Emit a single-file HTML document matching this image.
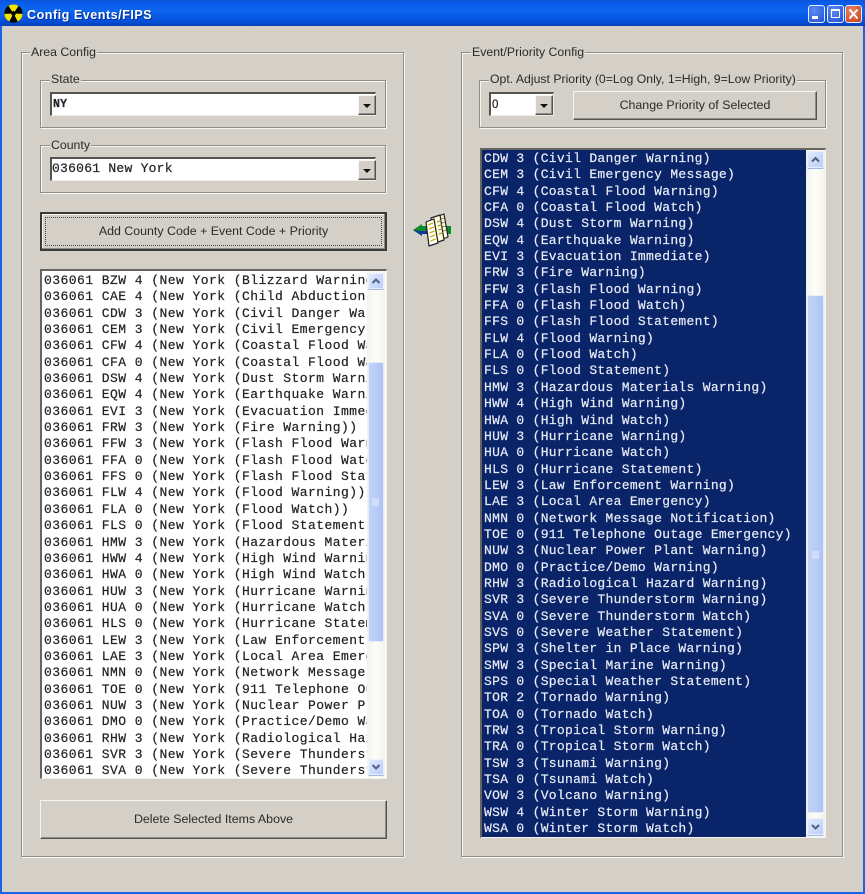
<!DOCTYPE html>
<html><head><meta charset="utf-8"><style>
html,body{margin:0;padding:0}
#w{position:relative;width:865px;height:894px;background:#d4d0c8;overflow:hidden;font-family:"Liberation Sans",sans-serif;color:#222;filter:blur(.3px)}
#w div{position:absolute;box-sizing:border-box}
.tb{left:0;top:0;width:865px;height:26px;background:linear-gradient(#0a55d8,#0a5cec 12%,#0d66ee 40%,#0551dd 80%,#0442b8)}
.bl{left:0;top:26px;width:2px;height:868px;background:#1e62e4}
.br{right:0;top:26px;width:2px;height:868px;background:#1e62e4}
.bb{left:0;bottom:0;width:865px;height:2px;background:#1e62e4}
.tt{left:27px;top:8px;color:#fff;font-weight:bold;font-size:12.6px;letter-spacing:.5px;white-space:nowrap;text-shadow:1px 1px 0 #0a2f90}
.g{border:1px solid #8f8d88;box-shadow:1px 1px 0 #f6f5f1,inset 1px 1px 0 #f6f5f1}
.l{background:#d4d0c8;font-size:12.3px;white-space:nowrap;padding:0 1px;height:15px;line-height:15px;color:#2a2a2a}
.c{background:#fff;border-top:2px solid #55534f;border-left:2px solid #55534f;border-right:1px solid #eeece6;border-bottom:1px solid #eeece6;font:bold 11.5px "Liberation Mono",monospace}
.ct{left:3px;top:3px;font:13px/16px "Liberation Mono",monospace;letter-spacing:.25px;-webkit-text-stroke:.2px #222;white-space:pre;color:#222}
.a{background:#d4d0c8;border:1px solid;border-color:#f6f5f1 #55534f #55534f #f6f5f1;box-shadow:inset -1px -1px 0 #8f8d88}
.a:after{content:"";position:absolute;left:4px;top:8px;border:4px solid transparent;border-top:4px solid #111;border-bottom:0}
.b{background:#d4d0c8;border:1px solid;border-color:#f6f5f1 #55534f #55534f #f6f5f1;box-shadow:inset -1px -1px 0 #8f8d88;text-align:center;font-size:12.4px;color:#2a2a2a}
.li{border-top:2px solid #66645f;border-left:2px solid #66645f;border-right:1px solid #f3f2ee;border-bottom:1px solid #f3f2ee;background:#fff;overflow:hidden}
.r{font:13px/16.34px "Liberation Mono",monospace;white-space:pre;-webkit-text-stroke:.2px currentColor}
.track{background:linear-gradient(90deg,#f4f3ec,#fdfdfa 50%,#f3f2ea)}
.th{background:linear-gradient(90deg,#c2d1f7,#b9cdf8 50%,#aec3f2);border:1px solid #e4ecfb;border-radius:2px}
.sb{background:linear-gradient(135deg,#e2ebfd,#b9cdf8);border:1px solid #eaf0fc;border-radius:2px;box-shadow:0 1px 0 #9db5e8}
.sb svg,.wb svg{position:absolute;left:0;top:0}
.wb{width:17px;height:18px;top:5px;border:1px solid #e8eefc;border-radius:3px;background:radial-gradient(circle at 35% 30%,#5d8df0,#1f50d8)}
</style></head><body><div id="w">
<div class="tb"></div><div class="bl"></div><div class="br"></div><div class="bb"></div>
<svg style="position:absolute;left:4px;top:4px" width="19" height="19" viewBox="0 0 18 18"><circle cx="9" cy="9" r="8.7" fill="#000"/><path d="M9 9 L4.2 1.8 A8.6 8.6 0 0 1 13.8 1.8Z M9 9 L17.6 9.4 A8.6 8.6 0 0 1 13 16.6Z M9 9 L5 16.6 A8.6 8.6 0 0 1 .4 9.4Z" fill="#f2e600"/><circle cx="9" cy="9" r="2.2" fill="#000"/></svg>
<div class="tt">Config Events/FIPS</div>
<div class="wb" style="left:808px"><svg width="15" height="16"><rect x="3" y="10" width="6" height="3" fill="#fff"/></svg></div>
<div class="wb" style="left:827px"><svg width="15" height="16"><rect x="3.5" y="3.5" width="8" height="8" fill="none" stroke="#fff"/><rect x="3" y="3" width="9" height="2" fill="#fff"/></svg></div>
<div class="wb" style="left:845px;background:radial-gradient(circle at 35% 30%,#e8886a,#c83c14)"><svg width="15" height="16"><path d="M3.5 3.5L11.5 12.5M11.5 3.5L3.5 12.5" stroke="#fff" stroke-width="2"/></svg></div>

<div class="g" style="left:21px;top:52px;width:383px;height:805px"></div>
<div class="l" style="left:30px;top:45px">Area Config</div>
<div class="g" style="left:40px;top:80px;width:346px;height:48px"></div>
<div class="l" style="left:50px;top:72px">State</div>
<div class="c" style="left:50px;top:92px;width:326px;height:24px"><div class="ct" style="top:3px;left:1px;font-size:11.5px;font-weight:bold">NY</div><div class="a" style="left:306px;top:1px;width:18px;height:20px"></div></div>
<div class="g" style="left:40px;top:145px;width:346px;height:48px"></div>
<div class="l" style="left:50px;top:138px">County</div>
<div class="c" style="left:50px;top:157px;width:326px;height:24px"><div class="ct" style="top:2px;left:0">036061 New York</div><div class="a" style="left:306px;top:1px;width:18px;height:20px"></div></div>

<div class="b" style="left:40px;top:212px;width:347px;height:39px;border:2px solid #3a3a38;border-left-color:#3a3a38;line-height:34px;box-shadow:inset -1px -1px 0 #8f8d88,inset 1px 1px 0 #f6f5f1">Add County Code + Event Code + Priority<div style="left:3px;top:3px;width:337px;height:29px;border:1px dotted #444"></div></div>

<div class="li" style="left:40px;top:269px;width:347px;height:510px">
<div style="left:2px;top:2px;width:323px;height:506px;overflow:hidden"><div class="r" style="position:static;color:#222;letter-spacing:.45px">036061 BZW 4 (New York (Blizzard Warning))
036061 CAE 4 (New York (Child Abduction Emergency))
036061 CDW 3 (New York (Civil Danger Warning))
036061 CEM 3 (New York (Civil Emergency Message))
036061 CFW 4 (New York (Coastal Flood Warning))
036061 CFA 0 (New York (Coastal Flood Watch))
036061 DSW 4 (New York (Dust Storm Warning))
036061 EQW 4 (New York (Earthquake Warning))
036061 EVI 3 (New York (Evacuation Immediate))
036061 FRW 3 (New York (Fire Warning))
036061 FFW 3 (New York (Flash Flood Warning))
036061 FFA 0 (New York (Flash Flood Watch))
036061 FFS 0 (New York (Flash Flood Statement))
036061 FLW 4 (New York (Flood Warning))
036061 FLA 0 (New York (Flood Watch))
036061 FLS 0 (New York (Flood Statement))
036061 HMW 3 (New York (Hazardous Materials Warning))
036061 HWW 4 (New York (High Wind Warning))
036061 HWA 0 (New York (High Wind Watch))
036061 HUW 3 (New York (Hurricane Warning))
036061 HUA 0 (New York (Hurricane Watch))
036061 HLS 0 (New York (Hurricane Statement))
036061 LEW 3 (New York (Law Enforcement Warning))
036061 LAE 3 (New York (Local Area Emergency))
036061 NMN 0 (New York (Network Message Notification))
036061 TOE 0 (New York (911 Telephone Outage Emergency))
036061 NUW 3 (New York (Nuclear Power Plant Warning))
036061 DMO 0 (New York (Practice/Demo Warning))
036061 RHW 3 (New York (Radiological Hazard Warning))
036061 SVR 3 (New York (Severe Thunderstorm Warning))
036061 SVA 0 (New York (Severe Thunderstorm Watch))</div></div>
<div class="track" style="left:325px;top:0;width:18px;height:507px"></div>
<div class="th" style="left:326px;top:91px;width:16px;height:280px"><svg style="position:absolute;left:3px;top:135px" width="8" height="8"><path d="M0 1h7M0 3h7M0 5h7M0 7h7" stroke="#e6edfc"/></svg></div>
<div class="sb" style="left:326px;top:2px;width:16px;height:16px"><svg width="14" height="14"><path d="M3.5 9L7 5.5L10.5 9" fill="none" stroke="#4d6185" stroke-width="2"/></svg></div>
<div class="sb" style="left:326px;top:488px;width:16px;height:16px"><svg width="14" height="14"><path d="M3.5 5L7 8.5L10.5 5" fill="none" stroke="#4d6185" stroke-width="2"/></svg></div>
</div>
<div class="b" style="left:40px;top:800px;width:347px;height:39px;line-height:36px">Delete Selected Items Above</div>

<svg style="position:absolute;left:413px;top:213px" width="40" height="36" viewBox="0 0 40 36"><path d="M0 17L9 11V13H38V21H9V23Z" fill="#0a8a2a"/><path d="M0 17L9 23V21H20V18H6Z" fill="#0a3a9a"/><g stroke="#222" stroke-width="1.2" stroke-linejoin="round"><path d="M23 4L31 1L35 24L27 27Z" fill="#fdfbe0"/><path d="M18 5L27 2L31 27L22 30Z" fill="#fffbd0"/><path d="M13 9L21 6L25 30L16 33Z" fill="#fff"/></g><path d="M15 12l5-2M16 16l5-2M16.5 20l5-2M17 24l5-2M17.5 28l5-2" stroke="#c9b800" stroke-width="1.4"/><path d="M24 9l4-1.5M25 13l4-1.500M25.500 17l4-1.500M26 21l4-1.500M28 6l3-1M29 10l3-1M29.500 14l3-1M30 18l3-1" stroke="#8a8a50" stroke-width="1"/></svg>

<div class="g" style="left:461px;top:52px;width:382px;height:805px"></div>
<div class="l" style="left:471px;top:45px">Event/Priority Config</div>
<div class="g" style="left:479px;top:80px;width:347px;height:48px"></div>
<div class="l" style="left:489px;top:72px;font-size:12.25px">Opt. Adjust Priority (0=Log Only, 1=High, 9=Low Priority)</div>
<div class="c" style="left:489px;top:92px;width:65px;height:24px"><div class="ct" style="top:3px;left:1px;font:11.5px/16px 'Liberation Sans',sans-serif">0</div><div class="a" style="left:44px;top:1px;width:18px;height:20px"></div></div>
<div class="b" style="left:573px;top:91px;width:244px;height:29px;line-height:26px">Change Priority of Selected</div>

<div class="li" style="left:480px;top:148px;width:346px;height:690px;background:#0a246a">
<div style="left:2px;top:1px;width:322px;height:686px;overflow:hidden"><div class="r" style="position:static;color:#e8ecf5;letter-spacing:.3px">CDW 3 (Civil Danger Warning)
CEM 3 (Civil Emergency Message)
CFW 4 (Coastal Flood Warning)
CFA 0 (Coastal Flood Watch)
DSW 4 (Dust Storm Warning)
EQW 4 (Earthquake Warning)
EVI 3 (Evacuation Immediate)
FRW 3 (Fire Warning)
FFW 3 (Flash Flood Warning)
FFA 0 (Flash Flood Watch)
FFS 0 (Flash Flood Statement)
FLW 4 (Flood Warning)
FLA 0 (Flood Watch)
FLS 0 (Flood Statement)
HMW 3 (Hazardous Materials Warning)
HWW 4 (High Wind Warning)
HWA 0 (High Wind Watch)
HUW 3 (Hurricane Warning)
HUA 0 (Hurricane Watch)
HLS 0 (Hurricane Statement)
LEW 3 (Law Enforcement Warning)
LAE 3 (Local Area Emergency)
NMN 0 (Network Message Notification)
TOE 0 (911 Telephone Outage Emergency)
NUW 3 (Nuclear Power Plant Warning)
DMO 0 (Practice/Demo Warning)
RHW 3 (Radiological Hazard Warning)
SVR 3 (Severe Thunderstorm Warning)
SVA 0 (Severe Thunderstorm Watch)
SVS 0 (Severe Weather Statement)
SPW 3 (Shelter in Place Warning)
SMW 3 (Special Marine Warning)
SPS 0 (Special Weather Statement)
TOR 2 (Tornado Warning)
TOA 0 (Tornado Watch)
TRW 3 (Tropical Storm Warning)
TRA 0 (Tropical Storm Watch)
TSW 3 (Tsunami Warning)
TSA 0 (Tsunami Watch)
VOW 3 (Volcano Warning)
WSW 4 (Winter Storm Warning)
WSA 0 (Winter Storm Watch)</div></div>
<div class="track" style="left:324px;top:0;width:19px;height:687px"></div>
<div class="th" style="left:325px;top:145px;width:17px;height:518px"><svg style="position:absolute;left:4px;top:255px" width="8" height="8"><path d="M0 1h7M0 3h7M0 5h7M0 7h7" stroke="#e6edfc"/></svg></div>
<div class="sb" style="left:325px;top:1px;width:17px;height:17px"><svg width="15" height="15"><path d="M4 9.500L7.500 6L11 9.500" fill="none" stroke="#4d6185" stroke-width="2"/></svg></div>
<div class="sb" style="left:325px;top:668px;width:17px;height:17px"><svg width="15" height="15"><path d="M4 6L7.500 9.500L11 6" fill="none" stroke="#4d6185" stroke-width="2"/></svg></div>
</div>
</div></body></html>
